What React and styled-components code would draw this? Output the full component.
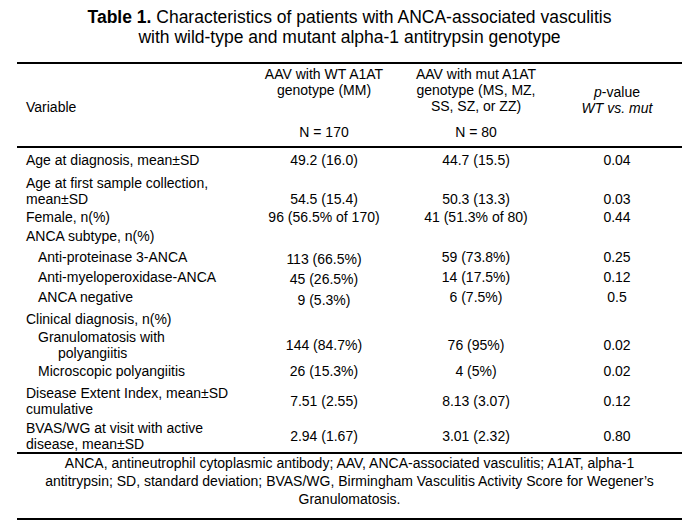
import React from "react";
import styled, { createGlobalStyle } from "styled-components";

const GlobalStyle = createGlobalStyle`
  html, body {
    margin: 0;
    padding: 0;
    background: #ffffff;
  }
  body {
    font-family: "Liberation Sans", Arial, Helvetica, sans-serif;
    color: #000000;
  }
`;

const Page = styled.div`
  width: 699px;
  padding-top: 7px;
  box-sizing: border-box;
`;

const Title = styled.h1`
  margin: 0;
  font-size: 17.5px;
  line-height: 20px;
  font-weight: normal;
  text-align: center;
`;

const TitleLabel = styled.span`
  font-weight: bold;
`;

const Table = styled.div`
  margin: 15px 17px 0;
  width: 665px;
  border-top: 2px solid #000;
  border-bottom: 2px solid #000;
  font-size: 14px;
  line-height: 16px;
`;

const Grid = styled.div`
  display: grid;
  grid-template-columns: 231px 152px 152px 130px;
`;

const Header = styled(Grid)`
  grid-template-rows: auto auto;
  padding: 2px 0 6px;
  border-bottom: 2px solid #000;
`;

const HeadCell = styled.div`
  grid-column: ${(p) => p.$col};
  grid-row: ${(p) => p.$row};
  align-self: start;
  padding-top: ${(p) => p.$pt || 0}px;
  padding-left: ${(p) => (p.$col === 1 ? 9 : 0)}px;
  text-align: ${(p) => (p.$col === 1 ? "left" : "center")};
`;

const Italic = styled.i`
  font-style: italic;
`;

const Row = styled(Grid)`
  padding-top: ${(p) => p.$pt}px;
`;

const Label = styled.div`
  padding-left: ${(p) => 9 + (p.$indent ? 12 : 0)}px;
  ${(p) =>
    p.$hang
      ? `padding-left: ${9 + 12 + 20}px; text-indent: -20px;`
      : ""}
`;

const Value = styled.div`
  text-align: center;
  align-self: ${(p) => (p.$bottom ? "end" : "center")};
  transform: translateY(${(p) => p.$nudge || 0}px);
`;

const Footnote = styled.p`
  margin: 0 17px;
  width: 665px;
  box-sizing: border-box;
  padding: 0 16px 10px;
  font-size: 14px;
  line-height: 18px;
  text-align: center;
  border-bottom: 2px solid #000;
`;

const rows = [
  { label: ["Age at diagnosis, mean±SD"], wt: "49.2 (16.0)", mut: "44.7 (15.5)", p: "0.04", pt: 4 },
  { label: ["Age at first sample collection,", "mean±SD"], wt: "54.5 (15.4)", mut: "50.3 (13.3)", p: "0.03", pt: 7, bottom: true },
  { label: ["Female, n(%)"], wt: "96 (56.5% of 170)", mut: "41 (51.3% of 80)", p: "0.44", pt: 2 },
  { label: ["ANCA subtype, n(%)"], wt: "", mut: "", p: "", pt: 3 },
  { label: ["Anti-proteinase 3-ANCA"], wt: "113 (66.5%)", mut: "59 (73.8%)", p: "0.25", pt: 5, indent: true, nudge: 2 },
  { label: ["Anti-myeloperoxidase-ANCA"], wt: "45 (26.5%)", mut: "14 (17.5%)", p: "0.12", pt: 4, indent: true, nudge: 2 },
  { label: ["ANCA negative"], wt: "9 (5.3%)", mut: "6 (7.5%)", p: "0.5", pt: 4, indent: true, nudge: 3 },
  { label: ["Clinical diagnosis, n(%)"], wt: "", mut: "", p: "", pt: 6 },
  { label: ["Granulomatosis with", "polyangiitis"], wt: "144 (84.7%)", mut: "76 (95%)", p: "0.02", pt: 2, hang: true },
  { label: ["Microscopic polyangiitis"], wt: "26 (15.3%)", mut: "4 (5%)", p: "0.02", pt: 2, indent: true },
  { label: ["Disease Extent Index, mean±SD", "cumulative"], wt: "7.51 (2.55)", mut: "8.13 (3.07)", p: "0.12", pt: 6 },
  { label: ["BVAS/WG at visit with active", "disease, mean±SD"], wt: "2.94 (1.67)", mut: "3.01 (2.32)", p: "0.80", pt: 3 },
];

export default function App() {
  return (
    <>
      <GlobalStyle />
      <Page>
        <Title>
          <TitleLabel>Table 1.</TitleLabel> Characteristics of patients with ANCA-associated vasculitis
          <br />
          with wild-type and mutant alpha-1 antitrypsin genotype
        </Title>
        <Table>
          <Header>
            <HeadCell $col={1} $row="1 / span 2" $pt={33}>Variable</HeadCell>
            <HeadCell $col={2} $row={1}>
              AAV with WT A1AT
              <br />
              genotype (MM)
            </HeadCell>
            <HeadCell $col={3} $row={1}>
              AAV with mut A1AT
              <br />
              genotype (MS, MZ,
              <br />
              SS, SZ, or ZZ)
            </HeadCell>
            <HeadCell $col={4} $row="1 / span 2" $pt={18}>
              <Italic>p</Italic>-value
              <br />
              <Italic>WT vs. mut</Italic>
            </HeadCell>
            <HeadCell $col={2} $row={2} $pt={10}>N = 170</HeadCell>
            <HeadCell $col={3} $row={2} $pt={10}>N = 80</HeadCell>
          </Header>
          {rows.map((r, i) => (
            <Row key={i} $pt={r.pt}>
              <Label $indent={r.indent} $hang={r.hang}>
                {r.label.map((l, j) => (
                  <React.Fragment key={j}>
                    {j > 0 && <br />}
                    {l}
                  </React.Fragment>
                ))}
              </Label>
              <Value $bottom={r.bottom} $nudge={r.nudge}>{r.wt}</Value>
              <Value $bottom={r.bottom}>{r.mut}</Value>
              <Value $bottom={r.bottom}>{r.p}</Value>
            </Row>
          ))}
        </Table>
        <Footnote>
          ANCA, antineutrophil cytoplasmic antibody; AAV, ANCA-associated vasculitis; A1AT, alpha-1
          antitrypsin; SD, standard deviation; BVAS/WG, Birmingham Vasculitis Activity Score for Wegener’s
          Granulomatosis.
        </Footnote>
      </Page>
    </>
  );
}
